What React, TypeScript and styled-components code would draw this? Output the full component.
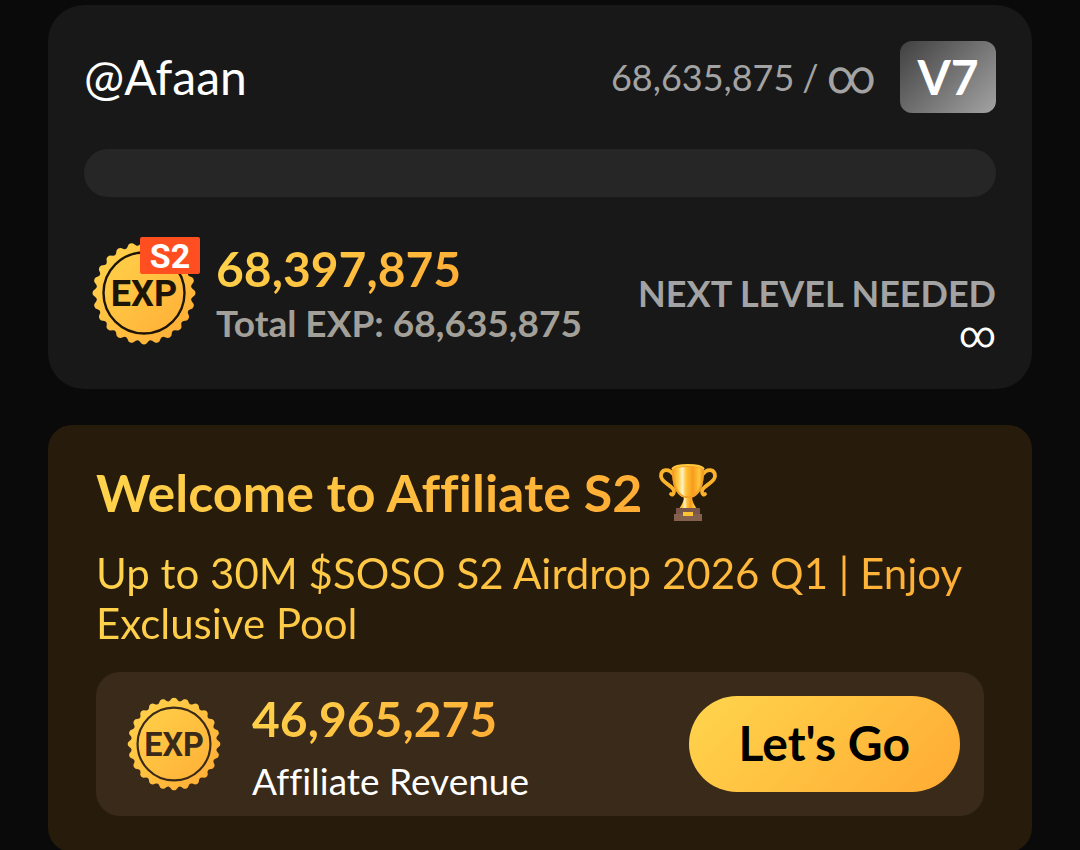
import React from 'react';
import styled, { createGlobalStyle, css } from 'styled-components';

const gold = 'linear-gradient(135deg, #ffd54d 0%, #ffab33 100%)';

const GlobalStyle = createGlobalStyle`
  * { box-sizing: border-box; }
  body {
    margin: 0;
    background: #0a0a0a;
    color: #fff;
    font-family: Lato, sans-serif;
    font-size: 36px;
    font-variant-ligatures: none;
  }
  h1, h2, p { margin: 0; }
`;

const goldText = css`
  background: ${gold};
  background-clip: text;
  -webkit-background-clip: text;
  color: transparent;
`;

const Page = styled.main`
  display: flex;
  flex-direction: column;
  gap: 36px;
  padding: 5px 48px 0;
`;

const LevelCard = styled.section`
  display: flex;
  flex-direction: column;
  gap: 36px;
  padding: 36px;
  border-radius: 36px;
  background: #181818;
`;

const Row = styled.div<{ $align?: string }>`
  display: flex;
  align-items: ${({ $align = 'center' }) => $align};
  justify-content: space-between;
`;

const Handle = styled.h1`
  font-size: 48px;
  line-height: 72px;
  font-weight: 400;
`;

const Level = styled.div`
  display: flex;
  align-items: center;
  gap: 24px;
`;

const Progress = styled.p`
  display: flex;
  align-items: center;
  gap: 8px;
  line-height: 72px;
  color: #a3a3a3;
`;

const Infinity = styled.span<{ $size: number }>`
  font-family: Roboto, sans-serif;
  font-size: ${({ $size }) => $size}px;
`;

const LevelTag = styled.strong`
  width: 96px;
  border-radius: 12px;
  background: linear-gradient(135deg, #404040, #a3a3a3);
  font-size: 48px;
  line-height: 72px;
  font-weight: 700;
  text-align: center;
`;

const Track = styled.div`
  height: 48px;
  border-radius: 24px;
  background: #262626;
`;

const Earned = styled.div<{ $gap: number }>`
  display: flex;
  align-items: center;
  gap: ${({ $gap }) => $gap}px;
`;

const Figures = styled.div`
  display: flex;
  flex-direction: column;
  align-items: flex-start;
  font-size: 37px;
`;

const Amount = styled.strong<{ $line: number }>`
  ${goldText}
  font-size: 48px;
  line-height: ${({ $line }) => $line}px;
  font-weight: 700;
`;

const Total = styled.span`
  color: #a3a099;
  line-height: 48px;
  font-weight: 700;
`;

const Needed = styled.div`
  display: flex;
  flex-direction: column;
  align-items: flex-end;
  line-height: 36px;
`;

const NeededLabel = styled.span`
  color: #a3a3a3;
  line-height: 48px;
  font-weight: 700;
`;

const PromoCard = styled.section`
  display: flex;
  flex-direction: column;
  padding: 36px 48px;
  border-radius: 24px;
  background: #271b0c;
`;

const PromoTitle = styled.h2`
  display: flex;
  align-items: flex-end;
  gap: 16px;
  font-size: 52px;
  line-height: 62px;
  font-weight: 700;
`;

const GoldSpan = styled.span`
  ${goldText}
`;

const PromoText = styled.p`
  ${goldText}
  margin: 25px 0 24px;
  font-size: 42px;
  line-height: 50px;
`;

const Revenue = styled.div`
  display: flex;
  align-items: center;
  justify-content: space-between;
  min-height: 144px;
  padding: 0 24px;
  border-radius: 24px;
  background: #3a2a19;
`;

const RevenueLabel = styled.span`
  line-height: 51px;
`;

const GoButton = styled.button`
  height: 96px;
  padding: 0 50px 3px;
  border: 0;
  border-radius: 48px;
  background: ${gold};
  color: #000;
  font: 700 48px Lato, sans-serif;
  cursor: pointer;
`;

const Drawing = styled.svg<{ $size: number }>`
  flex: none;
  width: ${({ $size }) => $size}px;
  height: ${({ $size }) => $size}px;
`;

const TEETH = 24;

const sealPath = (() => {
  const point = (i: number, r: number) => {
    const a = (i * Math.PI) / TEETH - Math.PI / 2;
    return `${(60 + r * Math.cos(a)).toFixed(2)} ${(60 + r * Math.sin(a)).toFixed(2)}`;
  };
  let d = `M${point(-0.35, 50.8)}`;
  for (let i = 0; i < TEETH; i++) {
    const k = i * 2;
    d += `Q${point(k, 52.2)} ${point(k + 0.35, 50.8)}L${point(k + 0.7, 48.4)}Q${point(k + 1, 46.8)} ${point(k + 1.3, 48.4)}L${point(k + 1.65, 50.8)}`;
  }
  return d + 'Z';
})();

function ExpSeal({ id, size, ink, season }: { id: string; size: number; ink: string; season?: string }) {
  return (
    <Drawing $size={size} viewBox="0 0 120 120" aria-hidden="true">
      <defs>
        <linearGradient id={id} x1="0" y1="0" x2="1" y2="1">
          <stop offset="0" stopColor="#ffd54d" />
          <stop offset="1" stopColor="#ffab33" />
        </linearGradient>
      </defs>
      <path d={sealPath} fill={`url(#${id})`} />
      <circle cx="60" cy="60" r="40.5" fill="none" stroke={ink} strokeWidth="2.4" />
      <text x="60" y="73" textAnchor="middle" fontFamily="Roboto, sans-serif" fontWeight="700" fontSize="36" fill={ink}>
        EXP
      </text>
      {season && (
        <>
          <rect x="56" y="4" width="60" height="37" rx="2" fill="#ff4f20" />
          <text x="86" y="35" textAnchor="middle" fontFamily="Roboto, sans-serif" fontWeight="700" fontSize="34" fill="#fff">
            {season}
          </text>
        </>
      )}
    </Drawing>
  );
}

function Trophy() {
  return (
    <Drawing $size={60} viewBox="0 0 60 60" role="img" aria-label="Trophy">
      <defs>
        <linearGradient id="cup" x1="0" x2="1" y1="0" y2="0">
          <stop offset="0" stopColor="#f59a1d" />
          <stop offset="0.2" stopColor="#ffca45" />
          <stop offset="0.32" stopColor="#fff3c4" />
          <stop offset="0.45" stopColor="#ffc034" />
          <stop offset="0.65" stopColor="#f79b1c" />
          <stop offset="0.85" stopColor="#ffc63c" />
          <stop offset="1" stopColor="#f08c17" />
        </linearGradient>
      </defs>
      <g fill="none" stroke="#fbb32c" strokeWidth="3.8" strokeLinecap="round">
        <path d="M15 11C11 5 3 6 3 13c0 7 12 9 13 15c0 4-2 4-3 3" />
        <path d="M45 11C49 5 57 6 57 13c0 7-12 9-13 15c0 4 2 4 3 3" />
      </g>
      <path d="M26 32h8c0 7 2 9 5 14H21c3-5 5-7 5-14Z" fill="url(#cup)" />
      <path d="M14 7c0-3 7-5 16-5s16 2 16 5c0 12-2 25-13 28h-6C16 32 14 19 14 7Z" fill="url(#cup)" />
      <path d="M15 7c0-3 7-4 15-4s15 1 15 4c0 12-2 24-12 27h-6C17 31 15 19 15 7Z" fill="none" stroke="#f3a024" strokeWidth="1.8" />
      <path d="M14 6c2-3 8-4 16-4s14 1 16 4" fill="none" stroke="#ffc83d" strokeWidth="2" />
      <path d="M18 45h24v7H18Z" fill="#79554a" />
      <path d="M16 51h28v7H16Z" fill="#85604f" />
      <path d="M25 49h10v4H25Z" fill="#ffc233" />
    </Drawing>
  );
}

export default function App() {
  return (
    <>
      <GlobalStyle />
      <Page>
        <LevelCard>
          <Row>
            <Handle>@Afaan</Handle>
            <Level>
              <Progress>
                <span>68,635,875</span>
                <span>/</span>
                <Infinity $size={48}>∞</Infinity>
              </Progress>
              <LevelTag>V7</LevelTag>
            </Level>
          </Row>
          <Track />
          <Row $align="flex-end">
            <Earned $gap={12}>
              <ExpSeal id="seal-season" size={120} ink="#1d1608" season="S2" />
              <Figures>
                <Amount $line={60}>68,397,875</Amount>
                <Total>Total EXP: 68,635,875</Total>
              </Figures>
            </Earned>
            <Needed>
              <NeededLabel>NEXT LEVEL NEEDED</NeededLabel>
              <Infinity $size={36}>∞</Infinity>
            </Needed>
          </Row>
        </LevelCard>
        <PromoCard>
          <PromoTitle>
            <GoldSpan>Welcome to Affiliate S2</GoldSpan>
            <Trophy />
          </PromoTitle>
          <PromoText>Up to 30M $SOSO S2 Airdrop 2026 Q1 | Enjoy Exclusive Pool</PromoText>
          <Revenue>
            <Earned $gap={24}>
              <ExpSeal id="seal-revenue" size={108} ink="#3a2a19" />
              <Figures>
                <Amount $line={72}>46,965,275</Amount>
                <RevenueLabel>Affiliate Revenue</RevenueLabel>
              </Figures>
            </Earned>
            <GoButton type="button">Let's Go</GoButton>
          </Revenue>
        </PromoCard>
      </Page>
    </>
  );
}
